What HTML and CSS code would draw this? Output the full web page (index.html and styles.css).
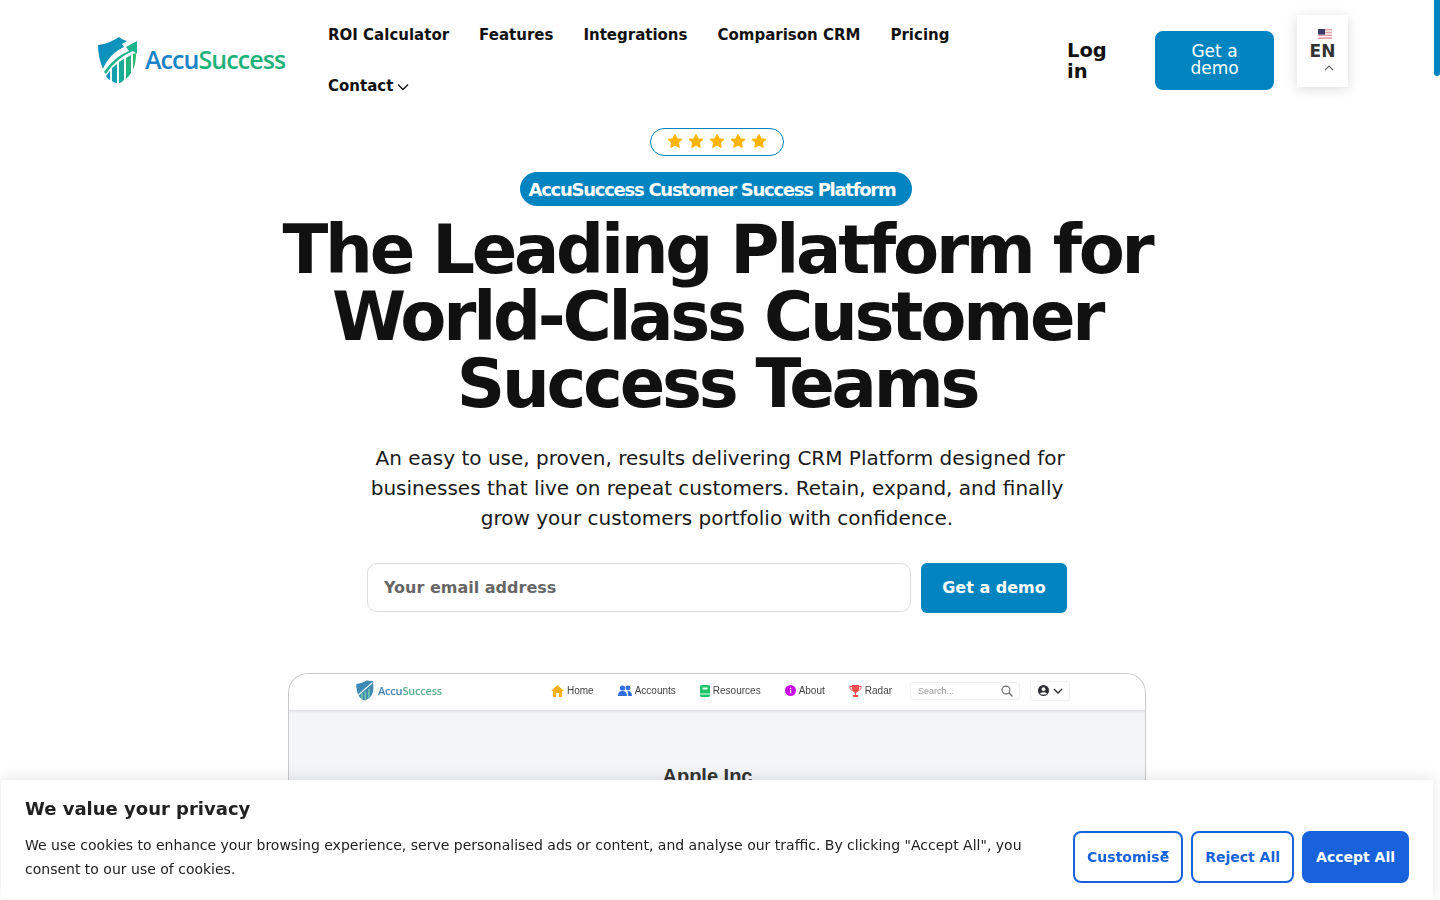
FILE: index.html
```html
<!DOCTYPE html>
<html lang="en">
<head>
    <meta charset="UTF-8">
    <meta name="viewport" content="width=device-width, initial-scale=1.0">
    <title>AccuSuccess</title>
    <link rel="stylesheet" href="styles.css">
</head>
<body>
    <div class="page">
        <header class="site-header">
            <a class="logo" href="#">
                <svg class="logo-mark" width="42" height="48" viewBox="0 0 42 48">
                    <defs>
                        <linearGradient id="shield" x1="0" y1="0" x2="1" y2="1">
                            <stop offset="0" stop-color="#0c86c4"/>
                            <stop offset="1" stop-color="#12a5b0"/>
                        </linearGradient>
                    </defs>
                    <path d="M1 9 C9 8 16 5 22 1 C24 3 27 4 30 5 L25 8 L27 11 C18 15 10 23 6 33 C3 26 1 18 1 9 Z" fill="url(#shield)"/>
                    <path d="M7 36 C14 26 22 19 32 15 L29 11 L40 5 L40 18 L36 15 C26 19 16 27 9 38 Z" fill="#1db38c"/>
                    <path d="M9 40 L13 35 L13 44 C11 43 10 42 9 40 Z" fill="#128fbe"/>
                    <path d="M15 32 L20 28 L20 47 C18 47 16 46 15 45 Z" fill="#14a0b0"/>
                    <path d="M22 26 L27 23 L27 44 C25 46 24 47 22 47 Z" fill="#18ac98"/>
                    <path d="M29 22 L34 19 L34 37 C33 39 31 41 29 43 Z" fill="#1fb57e"/>
                    <path d="M36 18 L39 17 C39 24 38 29 36 34 Z" fill="#25ba6f"/>
                </svg>
                <span class="logo-text"><span class="logo-accu">Accu</span><span class="logo-success">Success</span></span>
            </a>
            <nav class="main-nav">
                <a href="#">ROI Calculator</a>
                <a href="#">Features</a>
                <a href="#">Integrations</a>
                <a href="#">Comparison CRM</a>
                <a href="#">Pricing</a>
                <a href="#">Contact
                    <svg class="caret" width="12" height="8" viewBox="0 0 12 8"><path d="M1 1.5 L6 6.5 L11 1.5" fill="none" stroke="#111" stroke-width="1.3"/></svg>
                </a>
            </nav>
            <a class="login" href="#">Log in</a>
            <a class="header-demo" href="#">Get a demo</a>
            <div class="lang">
                <svg class="flag" width="14" height="10" viewBox="0 0 14 10">
                    <rect width="14" height="10" fill="#f3f3f6"/>
                    <rect y="0" width="14" height="1.4" fill="#e8a0a8"/>
                    <rect y="2.8" width="14" height="1.4" fill="#e8a0a8"/>
                    <rect y="5.6" width="14" height="1.4" fill="#e8a0a8"/>
                    <rect y="8.4" width="14" height="1.6" fill="#e8a0a8"/>
                    <rect width="7" height="5.6" fill="#3c3b6e"/>
                </svg>
                <span class="lang-code">EN</span>
                <svg class="lang-up" width="10" height="6" viewBox="0 0 10 6"><path d="M1 5 L5 1 L9 5" fill="none" stroke="#666" stroke-width="1.2"/></svg>
            </div>
        </header>

        <main class="hero">
            <div class="stars">
                <svg width="16" height="16" viewBox="0 0 24 24"><path class="star" d="M12 2.5 L15 8.8 L21.8 9.7 L16.8 14.4 L18.1 21.2 L12 17.9 L5.9 21.2 L7.2 14.4 L2.2 9.7 L9 8.8 Z"/></svg>
                <svg width="16" height="16" viewBox="0 0 24 24"><path class="star" d="M12 2.5 L15 8.8 L21.8 9.7 L16.8 14.4 L18.1 21.2 L12 17.9 L5.9 21.2 L7.2 14.4 L2.2 9.7 L9 8.8 Z"/></svg>
                <svg width="16" height="16" viewBox="0 0 24 24"><path class="star" d="M12 2.5 L15 8.8 L21.8 9.7 L16.8 14.4 L18.1 21.2 L12 17.9 L5.9 21.2 L7.2 14.4 L2.2 9.7 L9 8.8 Z"/></svg>
                <svg width="16" height="16" viewBox="0 0 24 24"><path class="star" d="M12 2.5 L15 8.8 L21.8 9.7 L16.8 14.4 L18.1 21.2 L12 17.9 L5.9 21.2 L7.2 14.4 L2.2 9.7 L9 8.8 Z"/></svg>
                <svg width="16" height="16" viewBox="0 0 24 24"><path class="star" d="M12 2.5 L15 8.8 L21.8 9.7 L16.8 14.4 L18.1 21.2 L12 17.9 L5.9 21.2 L7.2 14.4 L2.2 9.7 L9 8.8 Z"/></svg>
            </div>
            <div class="badge">AccuSuccess Customer Success Platform</div>
            <h1>The Leading Platform for World-Class Customer Success Teams</h1>
            <p class="lead">&nbsp;An easy to use, proven, results delivering CRM Platform designed for businesses that live on repeat customers. Retain, expand, and finally grow your customers portfolio with confidence.</p>
            <form class="demo-form">
                <input class="email" type="text" placeholder="Your email address">
                <button class="demo-btn" type="button">Get a demo</button>
            </form>

            <div class="preview">
                <div class="preview-bar">
                    <div class="preview-logo">
                        <svg width="20" height="21" viewBox="0 0 42 48">
                            <path d="M1 9 C10 8 18 5 25 1 L40 3 L40 20 C40 33 32 43 20 47 C8 43 1 30 1 9 Z" fill="#3f8ab5"/>
                            <path d="M6 34 L38 6" stroke="#fff" stroke-width="3"/>
                            <path d="M14 30 V44 M22 26 V46 M30 20 V42" stroke="#6fc4a8" stroke-width="4"/>
                        </svg>
                        <span><span class="preview-accu">Accu</span><span class="preview-success">Success</span></span>
                    </div>
                    <div class="preview-menu">
                        <span class="preview-item">
                            <svg width="13" height="12" viewBox="0 0 13 12"><path d="M6.5 0 L13 6 H11 V12 H8 V8 H5 V12 H2 V6 H0 Z" fill="#fbb017"/></svg>Home
                        </span>
                        <span class="preview-item">
                            <svg width="14" height="12" viewBox="0 0 14 12"><circle cx="4.5" cy="3" r="2.6" fill="#2f6fe0"/><circle cx="10" cy="3" r="2.4" fill="#2f6fe0"/><path d="M0 11 C0 7 2 6 4.5 6 C7 6 9 7 9 11 Z M9.5 6 C12 6 14 7 14 11 H10 C10 9 10 7 9.5 6 Z" fill="#2f6fe0"/></svg>Accounts
                        </span>
                        <span class="preview-item">
                            <svg width="10" height="12" viewBox="0 0 10 12"><rect width="10" height="12" rx="1.5" fill="#1fc46b"/><rect x="2.5" y="2.5" width="5" height="2" fill="#e8fff2"/><rect x="0" y="8.5" width="10" height="1" fill="#e8fff2"/></svg>Resources
                        </span>
                        <span class="preview-item">
                            <svg width="11" height="11" viewBox="0 0 11 11"><circle cx="5.5" cy="5.5" r="5.5" fill="#c70ee8"/><rect x="5" y="4.6" width="1.2" height="3.6" fill="#fff"/><rect x="5" y="2.8" width="1.2" height="1.2" fill="#fff"/></svg>About
                        </span>
                        <span class="preview-item">
                            <svg width="13" height="12" viewBox="0 0 13 12"><path d="M3 0 H10 V4 C10 6 8.5 7.5 7 7.7 V10 H9 V12 H4 V10 H6 V7.7 C4.5 7.5 3 6 3 4 Z" fill="#f14e4e"/><path d="M3 1.5 H0.8 C0.8 4 1.8 5 3.5 5.5 M10 1.5 H12.2 C12.2 4 11.2 5 9.5 5.5" fill="none" stroke="#f14e4e"/></svg>Radar
                        </span>
                    </div>
                    <div class="preview-search">
                        <span>Search...</span>
                        <svg width="12" height="12" viewBox="0 0 12 12"><circle cx="5" cy="5" r="3.9" fill="none" stroke="#666" stroke-width="1.1"/><path d="M8 8 L11.5 11.5" stroke="#666" stroke-width="1.2"/></svg>
                    </div>
                    <div class="preview-user">
                        <svg width="11" height="11" viewBox="0 0 11 11"><circle cx="5.5" cy="5.5" r="5.5" fill="#2b2b33"/><circle cx="5.5" cy="4.2" r="1.9" fill="#fff"/><path d="M2 8.8 C3 6.8 8 6.8 9 8.8 C8 10 3 10 2 8.8 Z" fill="#fff"/></svg>
                        <svg width="10" height="6" viewBox="0 0 10 6"><path d="M1 1 L5 5 L9 1" fill="none" stroke="#2b2b33" stroke-width="1.3"/></svg>
                    </div>
                </div>
                <div class="preview-body">
                    <div class="preview-title">Apple Inc</div>
                </div>
            </div>
        </main>
    </div>

    <div class="scroll-thumb"></div>

    <section class="cookie">
        <h2>We value your privacy</h2>
        <div class="cookie-row">
            <p>We use cookies to enhance your browsing experience, serve personalised ads or content, and analyse our traffic. By clicking "Accept All", you consent to our use of cookies.</p>
            <div class="cookie-btns">
                <button class="cookie-btn customise" type="button">Customise
                    <svg class="customise-caret" width="8" height="5" viewBox="0 0 8 5"><path d="M0 0 H8 L4 5 Z" fill="#1863dc"/></svg>
                </button>
                <button class="cookie-btn" type="button">Reject All</button>
                <button class="cookie-btn accept" type="button">Accept All</button>
            </div>
        </div>
    </section>
</body>
</html>
```

FILE: styles.css
```css
html, body {
    margin: 0;
    height: 100%;
    overflow: hidden;
    background: #fff;
}
body {
    font-family: "DejaVu Sans", sans-serif;
    color: #111;
}
a {
    color: inherit;
    text-decoration: none;
}
.page {
    width: 1434px;
}

/* header */
.site-header {
    display: flex;
    align-items: center;
    height: 112px;
    padding: 0 86px 0 98px;
    box-sizing: border-box;
}
.logo {
    display: flex;
    align-items: center;
    gap: 6px;
    width: 230px;
    flex-shrink: 0;
    margin-top: 5px;
}
.logo-mark {
    flex-shrink: 0;
    margin-left: -1px;
    margin-top: 3px;
}
.logo-text {
    font-family: "Open Sans", sans-serif;
    font-size: 25px;
    font-weight: 600;
    letter-spacing: -0.93px;
}
.logo-accu {
    color: #1a84c6;
}
.logo-success {
    color: #1db27a;
}
.main-nav {
    display: flex;
    flex-wrap: wrap;
    column-gap: 30px;
    width: 725px;
    font-size: 15px;
    font-weight: 700;
    line-height: 51px;
    margin-top: 10px;
}
.caret {
    margin-left: -2px;
}
.login {
    width: 50px;
    margin-left: 14px;
    font-size: 19.5px;
    font-weight: 700;
    line-height: 21px;
    margin-top: 9px;
}
.header-demo {
    width: 119px;
    height: 59px;
    margin-left: 38px;
    margin-top: 8px;
    padding: 12px 28px;
    box-sizing: border-box;
    background: #0284c0;
    color: #fff;
    border-radius: 8px;
    font-size: 17px;
    line-height: 17px;
    text-align: center;
}
.lang {
    display: flex;
    flex-direction: column;
    align-items: center;
    width: 51px;
    height: 72px;
    margin-left: 23px;
    margin-top: -10px;
    padding-top: 14px;
    box-sizing: border-box;
    background: #fff;
    box-shadow: 0 2px 12px rgba(0, 0, 0, 0.14);
}
.flag {
    margin-left: 4px;
}
.lang-code {
    font-size: 17px;
    font-weight: 700;
    line-height: 20px;
    color: #333;
    margin-top: 2px;
}
.lang-up {
    margin-left: 12px;
    margin-top: 4px;
}

/* hero */
.hero {
    display: flex;
    flex-direction: column;
    align-items: center;
    margin-top: 16px;
}
.stars {
    display: flex;
    justify-content: center;
    gap: 5px;
    width: 134px;
    height: 28px;
    box-sizing: border-box;
    border: 1px solid #0284c0;
    border-radius: 14px;
    padding-top: 4px;
}
.star {
    fill: #ffb400;
    stroke: #ffb400;
    stroke-width: 2;
    stroke-linejoin: round;
}
.badge {
    margin-top: 16px;
    margin-left: -2px;
    height: 34px;
    padding: 0 17px 0 9px;
    background: #0284c0;
    color: #fff;
    border-radius: 17px;
    font-size: 18px;
    font-weight: 700;
    line-height: 36px;
    letter-spacing: -1.27px;
}
h1 {
    width: 900px;
    margin: 11px 0 0;
    font-size: 67.2px;
    font-weight: 700;
    line-height: 67px;
    letter-spacing: -3.25px;
    text-align: center;
    color: #111;
}
.lead {
    width: 700px;
    margin: 25px 0 0;
    font-size: 20px;
    line-height: 30px;
    text-align: center;
    color: #1a1a1a;
}
.demo-form {
    display: flex;
    gap: 10px;
    margin: 30px 0 0;
}
.email {
    width: 544px;
    height: 49px;
    padding: 0 16px;
    box-sizing: border-box;
    border: 1px solid #ddd;
    border-radius: 10px;
    font-family: inherit;
    font-size: 16px;
    font-weight: 700;
}
.email::placeholder {
    color: #666;
    opacity: 1;
}
.demo-btn {
    width: 146px;
    height: 50px;
    padding: 0 0 2px;
    border: 0;
    border-radius: 6px;
    background: #0284c0;
    color: #fff;
    font-family: inherit;
    font-size: 16px;
    font-weight: 700;
}

/* product screenshot */
.preview {
    width: 858px;
    height: 226px;
    margin-top: 60px;
    box-sizing: border-box;
    border: 1px solid #c9c9c9;
    border-bottom: 0;
    border-radius: 20px 20px 0 0;
    overflow: hidden;
    font-family: "Liberation Sans", sans-serif;
}
.preview-bar {
    display: flex;
    align-items: center;
    height: 36px;
    padding: 0 0 3px 66px;
    box-sizing: border-box;
    background: #fff;
    box-shadow: 0 1px 3px rgba(0, 0, 0, 0.12);
    position: relative;
    color: #444;
    font-size: 10px;
}
.preview-bar > div {
    filter: blur(0.3px);
}
.preview-logo {
    display: flex;
    align-items: center;
    gap: 3px;
    width: 196px;
    font-family: "Open Sans", sans-serif;
    font-size: 11px;
    font-weight: 600;
    letter-spacing: -0.2px;
}
.preview-accu {
    color: #3f82b8;
}
.preview-success {
    color: #5bb089;
}
.preview-menu {
    display: flex;
    gap: 24px;
}
.preview-item {
    display: flex;
    align-items: center;
    gap: 3px;
}
.preview-search {
    display: flex;
    align-items: center;
    justify-content: space-between;
    width: 110px;
    height: 18px;
    margin-left: 18px;
    padding: 0 6px 0 7px;
    box-sizing: border-box;
    border: 1px solid #f0f0f0;
    border-radius: 3px;
    font-size: 9px;
    color: #999;
}
.preview-user {
    display: flex;
    align-items: center;
    justify-content: center;
    gap: 4px;
    width: 38px;
    height: 18px;
    margin-left: 10px;
    border: 1px solid #f0f0f0;
    border-radius: 3px;
}
.preview-body {
    height: 190px;
    background: #f4f5f9;
    padding-top: 55px;
    box-sizing: border-box;
    text-align: center;
}
.preview-title {
    margin-left: -19px;
    font-size: 20px;
    font-weight: 700;
    color: #333;
}

/* fake scrollbar thumb, page itself does not scroll */
.scroll-thumb {
    position: fixed;
    top: 0;
    right: 0;
    width: 6px;
    height: 76px;
    background: #0284c0;
    border-radius: 0 0 3px 3px;
}

/* cookie banner */
.cookie {
    position: fixed;
    left: 1px;
    right: 7px;
    bottom: 1px;
    height: 119px;
    padding: 18px 24px 0;
    box-sizing: border-box;
    background: #fff;
    box-shadow: 0 -2px 14px rgba(0, 0, 0, 0.1);
    color: #212121;
}
.cookie h2 {
    margin: 0;
    font-size: 18px;
    font-weight: 700;
    line-height: 22px;
}
.cookie-row {
    display: flex;
    align-items: flex-start;
    justify-content: space-between;
    margin-top: 11px;
}
.cookie-row p {
    width: 1010px;
    margin: 2px 0 0;
    font-size: 14px;
    line-height: 24px;
}
.cookie-btns {
    display: flex;
    gap: 8px;
}
.cookie-btn {
    position: relative;
    height: 52px;
    padding: 0 12px;
    border: 2px solid #1863dc;
    border-radius: 8px;
    background: #fff;
    color: #1863dc;
    font-family: inherit;
    font-size: 14px;
    font-weight: 700;
}
.accept {
    background: #1863dc;
    color: #fff;
}
.customise-caret {
    position: absolute;
    top: 18px;
    right: 12px;
}
```
